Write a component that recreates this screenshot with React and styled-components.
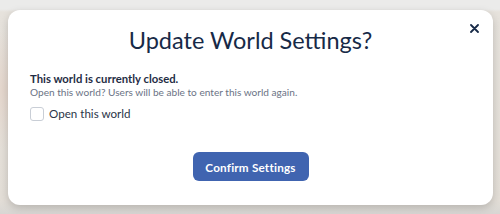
import styled, { createGlobalStyle } from 'styled-components';

const GlobalStyle = createGlobalStyle`
  html, body {
    margin: 0;
    padding: 0;
  }
  body {
    width: 500px;
    height: 214px;
    overflow: hidden;
    font-family: Lato, "Open Sans", sans-serif;
    background:
      radial-gradient(ellipse 30px 60px at 4px 90px, #e4d6cc 0%, rgba(228, 214, 204, 0) 100%),
      linear-gradient(180deg, #ebebea 0px, #ebebea 9px, #e6e2dc 12px, #e3ded7 200px, #d8d6d3 214px);
  }
`;

const Backdrop = styled.div`
  width: 500px;
  height: 214px;
  box-sizing: border-box;
  padding: 10px 7px 9px 8px;
  display: flex;
`;

const Modal = styled.div`
  position: relative;
  flex: 1;
  background: #ffffff;
  border-radius: 12px;
  box-shadow: 0 3px 8px rgba(0, 0, 0, 0.18);
  display: flex;
  flex-direction: column;
  padding: 13px 22px 0 22px;
`;

const Title = styled.h2`
  margin: 0;
  text-align: center;
  font-family: Lato, sans-serif;
  font-weight: 400;
  font-size: 23.5px;
  line-height: 34px;
  color: #172a47;
`;

const CloseButton = styled.button`
  position: absolute;
  top: 9px;
  right: 10px;
  width: 18px;
  height: 18px;
  padding: 0;
  border: none;
  background: none;
  display: flex;
  align-items: center;
  justify-content: center;
  color: #172a47;
  cursor: pointer;
`;

const Body = styled.div`
  margin-top: 14px;
  display: flex;
  flex-direction: column;
`;

const Lead = styled.p`
  margin: 0;
  font-size: 11.3px;
  font-weight: 700;
  line-height: 15px;
  color: #1f2d44;
`;

const Hint = styled.p`
  margin: 0;
  font-size: 10.1px;
  line-height: 13px;
  color: #6b7385;
`;

const CheckRow = styled.label`
  margin-top: 7px;
  display: flex;
  align-items: center;
  gap: 5px;
  font-size: 11.6px;
  line-height: 16px;
  color: #2b3548;
  cursor: pointer;
`;

const Box = styled.span`
  width: 12px;
  height: 12px;
  border: 1px solid #c9ced6;
  border-radius: 3px;
  background: #fff;
`;

const Footer = styled.div`
  margin-top: 30px;
  display: flex;
  justify-content: center;
`;

const ConfirmButton = styled.button`
  width: 116px;
  height: 29px;
  border: none;
  border-radius: 6px;
  background: #4064b0;
  color: #ffffff;
  font-family: Lato, sans-serif;
  font-size: 11.7px;
  font-weight: 700;
  letter-spacing: 0.2px;
  cursor: pointer;
`;

export default function App() {
  return (
    <>
      <GlobalStyle />
      <Backdrop>
        <Modal>
          <Title>Update World Settings?</Title>
          <CloseButton aria-label="Close">
            <svg width="9" height="9" viewBox="0 0 9 9">
              <path d="M1 1 L8 8 M8 1 L1 8" stroke="currentColor" strokeWidth="1.8" strokeLinecap="round" />
            </svg>
          </CloseButton>
          <Body>
            <Lead>This world is currently closed.</Lead>
            <Hint>Open this world? Users will be able to enter this world again.</Hint>
            <CheckRow>
              <Box />
              Open this world
            </CheckRow>
          </Body>
          <Footer>
            <ConfirmButton>Confirm Settings</ConfirmButton>
          </Footer>
        </Modal>
      </Backdrop>
    </>
  );
}
